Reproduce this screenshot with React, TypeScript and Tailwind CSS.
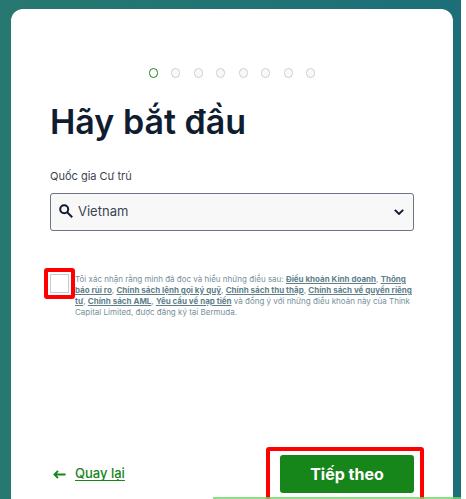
import { useState } from "react";

const STEPS = [1, 2, 3, 4, 5, 6, 7, 8];

const linkClass = "font-bold text-[#5f7f89] underline underline-offset-1";

const StepDots = ({ current }: { current: number }) => {
  return (
    <ol className="mx-auto flex w-[166px] justify-between">
      {STEPS.map((step) => (
        <li
          key={step}
          aria-label={`${step}`}
          className={
            step === current
              ? "h-[10px] w-[9px] rounded-full border border-[#16851a] bg-white"
              : "h-[10px] w-[9px] rounded-full border border-[#cfcfd4] bg-[#f8f8f9]"
          }
        />
      ))}
    </ol>
  );
};

const App = () => {
  const [country, setCountry] = useState("vn");
  const [accepted, setAccepted] = useState(false);

  return (
    <div className="min-h-screen bg-white pr-[5px] font-['Inter','Liberation_Sans',sans-serif]">
      <div className="relative flex min-h-screen flex-col overflow-hidden bg-linear-to-r from-[#277870] to-[#1c6f78] pt-[9px] pr-2 pl-[11px]">
        <main className="flex flex-1 flex-col rounded-t-xl bg-white px-[39px] pt-[59px] pb-[6px]">
          <StepDots current={1} />

          <h1 className="mt-[22px] text-[34px] leading-[44px] font-semibold text-[#101c30]">
            Hãy bắt đầu
          </h1>

          <label
            htmlFor="country"
            className="mt-[24px] text-[11px] leading-4 text-[#3c4450]"
          >
            Quốc gia Cư trú
          </label>
          <div className="relative mt-[9px]">
            <svg
              viewBox="0 0 14 14"
              className="pointer-events-none absolute top-[11px] left-[9px] size-[14px] text-[#101c30]"
              fill="none"
              stroke="currentColor"
              strokeWidth="2"
            >
              <circle cx="5.2" cy="5.2" r="4" />
              <path d="M8.2 8.2l5 5" />
            </svg>
            <select
              id="country"
              value={country}
              onChange={(e) => setCountry(e.target.value)}
              className="h-[38px] w-full appearance-none rounded-[3px] border border-[#6b7384] bg-[#f8f8f9] pr-8 pl-[27px] text-[13px] text-[#3c4450]"
            >
              <option value="vn">Vietnam</option>
            </select>
            <svg
              viewBox="0 0 10 6"
              className="pointer-events-none absolute top-4 right-[10px] h-[6px] w-[10px] text-[#101c30]"
              fill="none"
              stroke="currentColor"
              strokeWidth="2"
            >
              <path d="M0.8 0.9L5 4.9L9.2 0.9" />
            </svg>
          </div>

          <div className="mt-[43px] flex">
            <div className="relative size-[19px] shrink-0">
              <input
                id="terms"
                type="checkbox"
                checked={accepted}
                onChange={(e) => setAccepted(e.target.checked)}
                className="block size-[19px] appearance-none border border-[#c9ccd3] bg-white checked:bg-[#16851a]"
              />
              <span className="pointer-events-none absolute -inset-[6px] rounded-[3px] border-4 border-[#ff0000]" />
            </div>
            <label
              htmlFor="terms"
              className="ml-[6px] flex-1 text-[8px] leading-[11px] text-[#76909a]"
            >
              Tôi xác nhận rằng mình đã đọc và hiểu những điều sau:{" "}
              <a href="#business" className={linkClass}>Điều khoản Kinh doanh</a>,{" "}
              <a href="#risk" className={linkClass}>Thông báo rủi ro</a>,{" "}
              <a href="#margin" className={linkClass}>Chính sách lệnh gọi ký quỹ</a>,{" "}
              <a href="#collection" className={linkClass}>Chính sách thu thập</a>,{" "}
              <a href="#privacy" className={linkClass}>Chính sách về quyền riêng tư</a>,{" "}
              <a href="#aml" className={linkClass}>Chính sách AML</a>,{" "}
              <a href="#deposit" className={linkClass}>Yêu cầu về nạp tiền</a>{" "}
              và đồng ý với những điều khoản này của Think Capital Limited, được
              đăng ký tại Bermuda.
            </label>
          </div>

          <div className="mt-auto flex items-center justify-between pt-8">
            <a
              href="#back"
              className="flex items-center gap-[9px] pl-[3px] text-[13px] font-medium text-[#16851a]"
            >
              <svg
                viewBox="0 0 13 10"
                className="h-[10px] w-[13px]"
                fill="none"
                stroke="currentColor"
                strokeWidth="1.8"
              >
                <path d="M12.6 5.5H1.6M5 1.8L1.4 5.5L5 9.2" />
              </svg>
              <span className="underline underline-offset-2">Quay lại</span>
            </a>
            <div className="relative">
              <button
                type="button"
                className="h-[38px] w-[134px] rounded-[3px] bg-[#16851a] text-base font-bold text-white"
              >
                Tiếp theo
              </button>
              <span className="pointer-events-none absolute -top-2 -right-[10px] -bottom-3 -left-[14px] rounded-[3px] border-4 border-[#ff0000]" />
            </div>
          </div>
        </main>
        <div className="absolute right-0 bottom-0 h-[2px] w-[248px] bg-[#6fd66a]/80" />
      </div>
    </div>
  );
};

export default App;
